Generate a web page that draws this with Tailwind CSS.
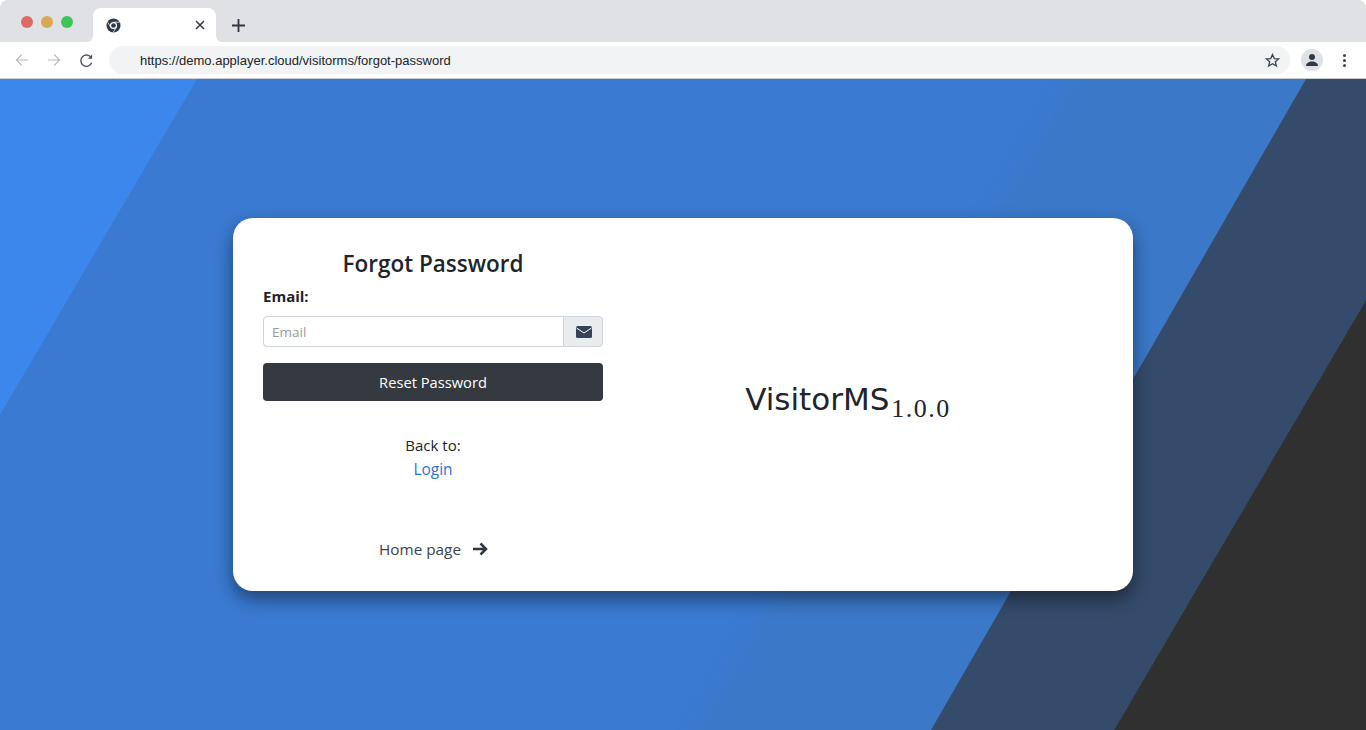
<!DOCTYPE html>
<html lang="en">
<head>
    <meta charset="UTF-8">
    <title>Forgot Password</title>
    <script src="https://cdn.jsdelivr.net/npm/@tailwindcss/browser@4"></script>
</head>
<body class="w-[1366px] h-[730px] overflow-hidden bg-white font-['Open_Sans',sans-serif]">
    <!-- Browser chrome -->
    <header class="h-[79px] bg-white border-b border-[#c9ccd1] rounded-t-lg overflow-hidden">
        <div class="h-[42px] bg-[#dfe1e5] flex items-end pl-[21px]">
            <div class="flex gap-[8px] self-center mt-[1px]">
                <span class="w-[12px] h-[12px] rounded-full bg-[#de6a65]"></span>
                <span class="w-[12px] h-[12px] rounded-full bg-[#d8aa55]"></span>
                <span class="w-[12px] h-[12px] rounded-full bg-[#3fc456]"></span>
            </div>
            <div class="relative ml-[20px] w-[123px] h-[34px] bg-white rounded-t-lg flex items-center pl-[13px] pr-[11px] justify-between">
                <svg class="absolute left-[-6px] bottom-0 w-[6px] h-[6px]" viewBox="0 0 6 6"><path d="M6 0v6H0a6 6 0 0 0 6-6z" fill="#fff"/></svg>
                <svg class="absolute right-[-6px] bottom-0 w-[6px] h-[6px]" viewBox="0 0 6 6"><path d="M0 0v6h6a6 6 0 0 1-6-6z" fill="#fff"/></svg>
                <svg class="w-[15px] h-[15px]" viewBox="0 0 16 16">
                    <circle cx="8" cy="8" r="7.500" fill="#2f3a48"/>
                    <path d="M8 4.400h6.500M5 10L1.900 4.500M11 10l-3.400 5.400" stroke="#fff" stroke-width="0.800" fill="none"/>
                    <circle cx="8" cy="8" r="3.800" fill="#fff"/>
                    <circle cx="8" cy="8" r="2.500" fill="#2f3a48"/>
                </svg>
                <svg class="w-[10px] h-[10px]" viewBox="0 0 10 10" fill="none" stroke="#333a44" stroke-width="1.500"><path d="M1 1l8 8M9 1l-8 8"/></svg>
            </div>
            <svg class="ml-[16px] mb-[10px] w-[13px] h-[13px]" viewBox="0 0 13 13" fill="none" stroke="#2f3640" stroke-width="1.800"><path d="M6.500 0v13M0 6.500h13"/></svg>
        </div>
        <div class="h-[36px] flex items-center pl-[15px] pr-[20px]">
            <svg class="w-[14px] h-[14px] text-[#b4b8be]" viewBox="0 0 16 16" fill="none" stroke="currentColor" stroke-width="1.300"><path d="M15 8H1.500M8 1.500L1.500 8 8 14.500"/></svg>
            <svg class="ml-[18px] w-[14px] h-[14px] text-[#b4b8be]" viewBox="0 0 16 16" fill="none" stroke="currentColor" stroke-width="1.300"><path d="M1 8h13.500M8 1.500L14.500 8 8 14.500"/></svg>
            <svg class="ml-[18px] w-[15px] h-[15px] text-[#4a5058]" viewBox="0 0 16 16" fill="none" stroke="currentColor" stroke-width="1.500"><path d="M13.500 10.500a6 6 0 1 1-.3-5.200"/><path d="M14 1.500v4.500H9.500" fill="currentColor" stroke="none"/></svg>
            <div class="ml-[15px] flex-1 h-[28px] rounded-full bg-[#f1f3f4] flex items-center pl-[31px] pr-[10px] justify-between">
                <span class="font-['Liberation_Sans',sans-serif] text-[13px] mt-[2px] text-[#20242a]">https://demo.applayer.cloud/visitorms/forgot-password</span>
                <svg class="w-[15px] h-[15px]" viewBox="0 0 16 16" fill="none" stroke="#3a4552" stroke-width="1.400"><path d="M8 1.600l1.900 4.300 4.600.4-3.500 3 1.100 4.600L8 11.500l-4.100 2.400L5 9.300l-3.500-3 4.600-.4z"/></svg>
            </div>
            <div class="ml-[11px] w-[22px] h-[22px] rounded-full bg-[#dfe1e5] flex items-center justify-center">
                <svg class="w-[14px] h-[14px]" viewBox="0 0 14 14" fill="#2f3a48"><circle cx="7" cy="4" r="3"/><path d="M1 13c0-3 3-4.500 6-4.500s6 1.500 6 4.500z"/></svg>
            </div>
            <div class="ml-[20px] flex flex-col gap-[2px]">
                <span class="w-[3px] h-[3px] rounded-full bg-[#3a4552]"></span>
                <span class="w-[3px] h-[3px] rounded-full bg-[#3a4552]"></span>
                <span class="w-[3px] h-[3px] rounded-full bg-[#3a4552]"></span>
            </div>
        </div>
    </header>

    <!-- Page -->
    <main class="relative h-[651px] bg-[#3a7ad2] overflow-hidden flex items-start justify-center pt-[139px]">
        <svg class="absolute inset-0 w-[1366px] h-[651px]" viewBox="0 79 1366 651">
            <defs><filter id="soft"><feGaussianBlur stdDeviation="10"/></filter></defs>
            <polygon points="0,79 197,79 0,415" fill="#3b87ec"/>
            <polygon points="1085,60 1400,60 1400,760 680,760" fill="#3b78c8" filter="url(#soft)"/>
            <polygon points="1306,79 1366,79 1366,300 1114,730 931,730" fill="#344b6b"/>
            <polygon points="1366,300 1366,730 1114,730" fill="#2f302f"/>
        </svg>
        <section class="relative w-[900px] h-[373px] bg-white rounded-[20px] shadow-[0_8px_18px_rgba(0,0,0,0.45)] flex">
            <div class="w-[400px] pl-[30px] pr-[30px] text-[#212529]">
                <h1 class="mt-[29px] text-center text-[22.500px] leading-[34px] font-semibold">Forgot Password</h1>
                <label class="block mt-[4px] text-[15px] leading-[22px] font-bold">Email:</label>
                <div class="mt-[9px] flex h-[31px]">
                    <div class="flex-1 border border-[#ced4da] rounded-l-[4px] pl-[8px] text-[13.500px] leading-[30px] text-[#939aa0]">Email</div>
                    <div class="w-[40px] -ml-px pl-[2px] bg-[#e9ecef] border border-[#ced4da] rounded-r-[4px] flex items-center justify-center">
                        <svg class="w-[16px] h-[12px]" viewBox="0 0 16 12"><rect width="16" height="12" rx="1.500" fill="#34425a"/><path d="M0.500 2l7.500 5 7.500-5" fill="none" stroke="#fff" stroke-width="1"/></svg>
                    </div>
                </div>
                <button class="mt-[16px] w-full h-[38px] bg-[#343a40] text-white text-[14.700px] rounded-[4px]">Reset Password</button>
                <p class="mt-[32px] text-center text-[15px] leading-[24px]">Back to:<br><a class="text-[15.500px] text-[#2b74d8]" href="#">Login</a></p>
                <a class="mt-[56px] pl-[1px] flex items-center justify-center gap-[11px] text-[15.300px] leading-[24px] text-[#3a4250]" href="#">Home page
                    <svg class="w-[16px] h-[14px]" viewBox="0 0 16 14" fill="none" stroke="#2f3640" stroke-width="2.500"><path d="M1 7h13M8.500 1.500L14 7l-5.500 5.500"/></svg>
                </a>
            </div>
            <div class="flex-1 flex items-center justify-center pb-[10px] pr-[70px]">
                <p class="text-[#212529] text-[31px] font-['DejaVu_Sans',sans-serif] whitespace-nowrap">VisitorMS<sub class="font-['Liberation_Serif',serif] text-[26px] tracking-[1.500px] ml-[2px]">1.0.0</sub></p>
            </div>
        </section>
    </main>
</body>
</html>
